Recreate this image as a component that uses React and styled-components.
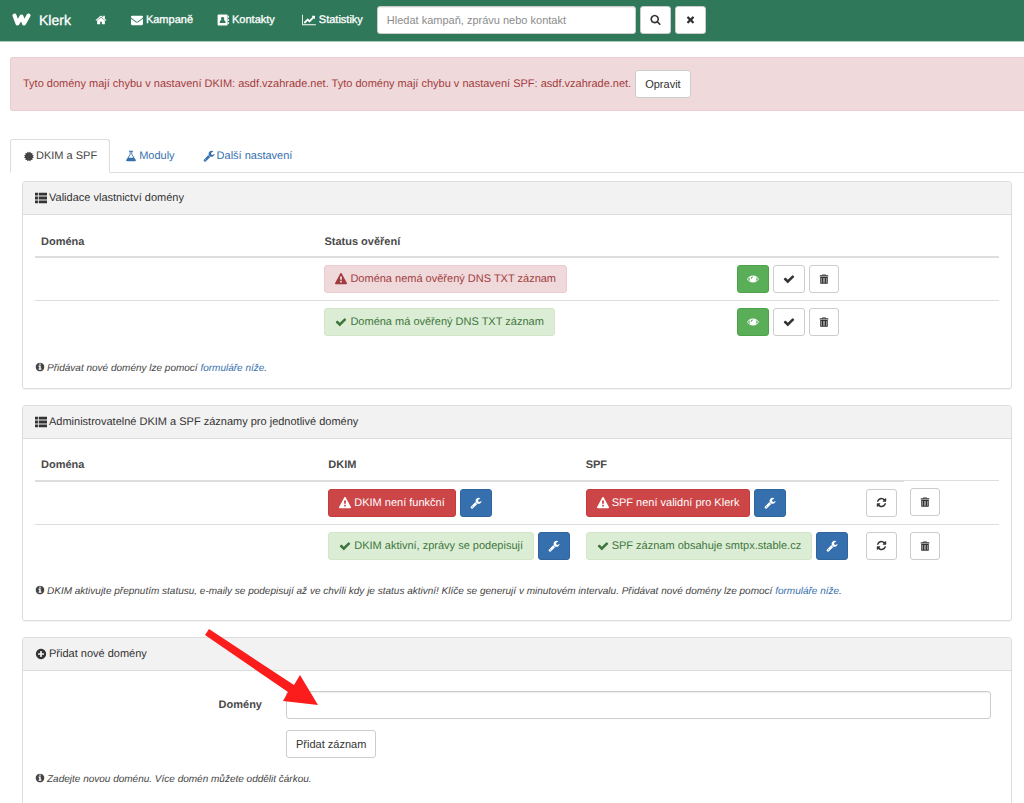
import React, { useState } from "react";
import styled, { createGlobalStyle } from "styled-components";

const GlobalStyle = createGlobalStyle`
	*, *::before, *::after {
		box-sizing: border-box;
	}
	body {
		margin: 0;
		background: #fff;
		color: #444;
		font-family: "Liberation Sans", Arial, sans-serif;
		font-size: 11px;
		line-height: 16px;
		text-rendering: geometricPrecision;
		overflow-x: hidden;
	}
	a {
		color: #3670ad;
		text-decoration: none;
	}
	button, input {
		font: inherit;
	}
`;

/* path data on a 1792 grid */
const icons = {
	home:
		"M1472 992v480q0 26-19 45t-45 19h-384v-384h-256v384h-384q-26 0-45-19t-19-45v-480q0-1 .5-3t.5-3l575-474 575 474q1 2 1 6zm223-69l-62 74q-8 9-21 11h-3q-13 0-21-7l-692-577-692 577q-12 8-24 7-13-2-21-11l-62-74q-8-10-7-23.5t11-21.5l719-599q32-26 76-26t76 26l244 204v-195q0-14 9-23t23-9h192q14 0 23 9t9 23v408l219 182q10 8 11 21.5t-7 23.5z",
	envelope:
		"M1792 710v794q0 66-47 113t-113 47h-1472q-66 0-113-47t-47-113v-794q44 49 101 87 362 246 497 345 57 42 92.5 65.5t94.5 48 110 24.5h2q51 0 110-24.5t94.5-48 92.5-65.5q170-123 498-345 57-39 100-87zm0-294q0 79-49 151t-122 123q-376 261-468 325-10 7-42.5 31t-54 38.5-52 32.5-57.5 27-50 9h-2q-23 0-50-9t-57.5-27-52-32.5-54-38.5-42.5-31q-91-64-262-182.5t-205-142.5q-62-42-117-115.5t-55-136.5q0-78 41.5-130t118.5-52h1472q65 0 112.5 47t47.5 113z",
	book:
		"M260 60h1160q70 0 120 50t50 120v1332q0 70-50 120t-120 50h-1160q-70 0-120-50t-50-120v-1332q0-70 50-120t120-50zM1640 270h90q40 0 40 40v220q0 40-40 40h-90zM1640 740h90q40 0 40 40v220q0 40-40 40h-90zM1640 1210h90q40 0 40 40v220q0 40-40 40h-90zM840 430a250 270 0 0 0-165 473q-275 60-275 360 0 90 90 90h700q90 0 90-90 0-300-275-360a250 270 0 0 0-165-473z",
	search:
		"M1216 832q0-185-131.5-316.5t-316.5-131.5-316.5 131.5-131.5 316.5 131.5 316.5 316.5 131.5 316.5-131.5 131.5-316.5zm512 832q0 52-38 90t-90 38q-54 0-90-38l-343-342q-179 124-399 124-143 0-273.5-55.5t-225-150-150-225-55.5-273.5 55.5-273.5 150-225 225-150 273.5-55.5 273.5 55.5 225 150 150 225 55.5 273.5q0 220-124 399l343 343q37 37 37 90z",
	times:
		"M1490 1322q0 40-28 68l-136 136q-28 28-68 28t-68-28l-294-294-294 294q-28 28-68 28t-68-28l-136-136q-28-28-28-68t28-68l294-294-294-294q-28-28-28-68t28-68l136-136q28-28 68-28t68 28l294 294 294-294q28-28 68-28t68 28l136 136q28 28 28 68t-28 68l-294 294 294 294q28 28 28 68z",
	certificate:
		"M1575 896l138 135q30 28 20 70-12 41-52 51l-188 48 53 186q12 41-19 70-29 31-70 19l-186-53-48 188q-10 40-51 52-12 2-19 2-31 0-51-22l-135-138-135 138q-28 30-70 20-41-11-51-52l-48-188-186 53q-41 12-70-19-31-29-19-70l53-186-188-48q-40-10-52-51-10-42 20-70l138-135-138-135q-30-28-20-70 12-41 52-51l188-48-53-186q-12-41 19-70 29-31 70-19l186 53 48-188q10-41 51-51 41-12 70 19l135 139 135-139q29-30 70-19 41 10 51 51l48 188 186-53q41-12 70 19 31 29 19 70l-53 186 188 48q40 10 52 51 10 42-20 70z",
	flask:
		"M1591 1448q56 89 21.5 152.5t-140.5 63.5h-1152q-106 0-140.5-63.5t21.5-152.5l503-793v-399h-64q-26 0-45-19t-19-45 19-45 45-19h512q26 0 45 19t19 45-19 45-45 19h-64v399zm-779-725l-272 429h712l-272-429-20-31v-436h-128v436z",
	wrench:
		"M448 1472q0-26-19-45t-45-19-45 19-19 45 19 45 45 19 45-19 19-45zm644-420l-682 682q-37 37-90 37-52 0-91-37l-106-108q-38-36-38-90 0-53 38-91l681-681q39 98 114.5 173.5t173.5 114.5zm634-435q0 39-23 106-47 134-164.5 217.5t-258.5 83.5q-185 0-316.5-131.5t-131.5-316.5 131.5-316.5 316.5-131.5q58 0 121.5 16.5t107.5 46.5q16 11 16 28t-16 28l-293 169v224l193 107q5-3 79-48.5t135.5-81 70.5-35.5q15 0 23.5 10t8.5 25z",
	list:
		"M0 100h440v440h-440zM560 100h1232v440h-1232zM0 676h440v440h-440zM560 676h1232v440h-1232zM0 1252h440v440h-440zM560 1252h1232v440h-1232z",
	info:
		"M1152 1376v-160q0-14-9-23t-23-9h-96v-512q0-14-9-23t-23-9h-320q-14 0-23 9t-9 23v160q0 14 9 23t23 9h96v320h-96q-14 0-23 9t-9 23v160q0 14 9 23t23 9h448q14 0 23-9t9-23zm-128-896v-160q0-14-9-23t-23-9h-192q-14 0-23 9t-9 23v160q0 14 9 23t23 9h192q14 0 23-9t9-23zm640 416q0 209-103 385.5t-279.5 279.5-385.5 103-385.5-103-279.5-279.5-103-385.5 103-385.5 279.5-279.5 385.5-103 385.5 103 279.5 279.5 103 385.5z",
	plus:
		"M1344 960v-128q0-26-19-45t-45-19h-256v-256q0-26-19-45t-45-19h-128q-26 0-45 19t-19 45v256h-256q-26 0-45 19t-19 45v128q0 26 19 45t45 19h256v256q0 26 19 45t45 19h128q26 0 45-19t19-45v-256h256q26 0 45-19t19-45zm320-64q0 209-103 385.5t-279.5 279.5-385.5 103-385.5-103-279.5-279.5-103-385.5 103-385.5 279.5-279.5 385.5-103 385.5 103 279.5 279.5 103 385.5z",
	warning:
		"M1024 1375v-190q0-14-9.500-23.500t-22.500-9.500h-192q-13 0-22.500 9.500t-9.500 23.500v190q0 14 9.500 23.500t22.500 9.500h192q13 0 22.500-9.500t9.500-23.500zm-2-374l18-459q0-12-10-19-13-11-24-11h-220q-11 0-24 11-10 7-10 21l17 457q0 10 10 16.500t24 6.500h185q14 0 23.500-6.500t10.500-16.500zm-14-934l768 1408q35 63-2 126-17 29-46.500 46t-63.500 17h-1536q-34 0-63.500-17t-46.500-46q-37-63-2-126l768-1408q17-31 47-49t65-18 65 18 47 49z",
	check:
		"M1671 566q0 40-28 68l-724 724-136 136q-28 28-68 28t-68-28l-136-136-362-362q-28-28-28-68t28-68l136-136q28-28 68-28t68 28l294 295 656-657q28-28 68-28t68 28l136 136q28 28 28 68z",
	refresh:
		"M1639 1056q0 5-1 7-64 268-268 434.500t-478 166.500q-146 0-282.500-55t-243.500-157l-129 129q-19 19-45 19t-45-19-19-45v-448q0-26 19-45t45-19h448q26 0 45 19t19 45-19 45l-137 137q71 66 161 102t187 36q134 0 250-65t186-179q11-17 53-117 8-23 30-23h192q13 0 22.500 9.500t9.500 22.500zm25-800v448q0 26-19 45t-45 19h-448q-26 0-45-19t-19-45 19-45l138-138q-148-137-349-137-134 0-250 65t-186 179q-11 17-53 117-8 23-30 23h-199q-13 0-22.500-9.500t-9.500-22.500v-7q65-268 270-434.500t480-166.500q146 0 284 55.500t245 156.500l130-129q19-19 45-19t45 19 19 45z",
	eye:
		"M896 380q-300 0-530 160t-366 356q136 196 366 356t530 160 530-160 366-356q-136-196-366-356t-530-160zM430 590q-60 110-60 230 0 210 150 370-240-90-400-294 130-190 310-306zM1362 590q180 116 310 306-160 204-400 294 150-160 150-370 0-120-60-230zM830 520q70 0 70 80t-80 90q-90 20-110 120-10 70-80 70-70-10-60-90 30-230 260-270z",
	trash:
		"M660 60h472q60 0 60 60v100h400q80 0 80 80v160h-1552v-160q0-80 80-80h400v-100q0-60 60-60zM720 150v70h352v-70zM220 540h1352v1100q0 110-110 110h-1132q-110 0-110-110zM440 700v880h80v-880zM720 700v880h80v-880zM992 700v880h80v-880zM1272 700v880h80v-880z",
};

const Svg = styled.svg`
	width: ${(props) => props.$size}px;
	height: ${(props) => props.$size}px;
	flex: none;
	fill: currentColor;
	vertical-align: -1px;
`;

function Icon({ name, size = 12 }) {
	return (
		<Svg $size={size} viewBox='0 0 1792 1792' aria-hidden='true'>
			<path fillRule='evenodd' d={icons[name]} />
		</Svg>
	);
}

const ChartSvg = styled.svg`
	width: 14px;
	height: 12px;
	fill: currentColor;
`;

const Navbar = styled.nav`
	display: flex;
	align-items: center;
	height: 42px;
	padding: 0 12px 2px;
	background: #2f785a;
	border-bottom: 1px solid #a9cbbb;
	color: #fff;
`;
const Brand = styled.a`
	display: flex;
	align-items: center;
	gap: 8px;
	margin-right: 24px;
	color: #fff;
	font-size: 14px;
	-webkit-text-stroke: 0.3px;
	svg {
		width: 19px;
		height: 14px;
	}
`;
const NavLink = styled.a`
	display: flex;
	align-items: center;
	gap: 3px;
	margin-right: ${(props) => props.$space || 24}px;
	color: #fff;
	-webkit-text-stroke: 0.3px;
`;
const SearchForm = styled.form`
	display: flex;
	align-items: center;
	gap: 4px;
	input {
		width: 259px;
	}
`;
const TextInput = styled.input`
	width: 100%;
	height: 28px;
	padding: 0 9px;
	border: 1px solid #ccc;
	border-radius: 3px;
	background: #fff;
	color: #555;
	box-shadow: inset 0 1px 1px rgba(0, 0, 0, 0.07);
	&::placeholder {
		color: #8c8c8c;
		opacity: 1;
	}
`;

const variants = {
	default: "#fff; border-color: #ccc; color: #333",
	primary: "#356fad; border-color: #2f649c; color: #fff",
	success: "#5bae58; border-color: #4fa24c; color: #fff",
};
const Button = styled.button`
	display: inline-flex;
	align-items: center;
	justify-content: center;
	min-width: ${(props) => props.$width || 32}px;
	height: 28px;
	padding: 0 9px;
	border: 1px solid;
	border-radius: 3px;
	background: ${(props) => variants[props.$variant || "default"]};
	cursor: pointer;
`;

const Alert = styled.div`
	display: flex;
	align-items: center;
	gap: 4px;
	margin: 15px 0 0 10px;
	padding: 12px;
	height: 54px;
	border: 1px solid #ebccd1;
	border-right: 0;
	border-radius: 3px 0 0 3px;
	background: #f0d9da;
	color: #a03c40;
	white-space: nowrap;
`;

const Tabs = styled.div`
	display: flex;
	margin: 28px 0 0 10px;
	border-bottom: 1px solid #ddd;
`;
const Tab = styled.a`
	display: flex;
	align-items: center;
	gap: 2px;
	height: 34px;
	margin: 0 2px -1px 0;
	padding: 0 12px;
	border: 1px solid ${(props) => (props.$active ? "#ddd" : "transparent")};
	border-bottom-color: ${(props) => (props.$active ? "#fff" : "transparent")};
	border-radius: 3px 3px 0 0;
	color: ${(props) => (props.$active ? "#444" : "#3670ad")};
`;

const Content = styled.main`
	display: flex;
	flex-direction: column;
	gap: 16px;
	padding: 8px 12px 16px 22px;
`;
const Panel = styled.section`
	position: relative;
	border: 1px solid #ddd;
	border-radius: 3px;
	box-shadow: 0 1px 1px rgba(0, 0, 0, 0.05);
`;
const PanelTitle = styled.h2`
	display: flex;
	align-items: center;
	gap: 2px;
	height: 33px;
	margin: 0;
	padding: 0 12px;
	border-bottom: 1px solid #ddd;
	background: #f2f2f2;
	color: #333;
	font-size: 11px;
	font-weight: normal;
`;
const PanelBody = styled.div`
	padding: ${(props) => props.$top || 12}px 12px ${(props) => props.$bottom || 12}px;
`;
const Table = styled.table`
	width: 100%;
	table-layout: fixed;
	border-collapse: collapse;
	th {
		height: 30px;
		padding: 0 6px;
		border-bottom: 2px solid #ddd;
		text-align: left;
		color: #4a4a4a;
	}
	td {
		height: 43px;
		padding: 7px 6px;
		border-top: 1px solid #ddd;
	}
`;
const Col = styled.col`
	width: ${(props) => props.$width};
`;
const Group = styled.div`
	display: flex;
	align-items: center;
	gap: 4px;
	white-space: nowrap;
`;

const tones = {
	danger: "#f0d9da; border-color: #ebccd1; color: #a03c40",
	success: "#dcedd5; border-color: #d3e6c8; color: #3c763d",
	error: "#cc4648; border-color: #c23c3e; color: #fff",
};
const StatusBox = styled.span`
	display: inline-flex;
	align-items: center;
	gap: 3px;
	height: 28px;
	padding: 0 10px;
	border: 1px solid;
	border-radius: 3px;
	background: ${(props) => tones[props.$tone]};
`;
function Status({ tone, children }) {
	return (
		<StatusBox $tone={tone}>
			<Icon name={tone === "success" ? "check" : "warning"} />
			{children}
		</StatusBox>
	);
}

const Note = styled.p`
	margin: ${(props) => props.$top}px 0 0;
	font-size: 10px;
	font-style: italic;
	svg {
		margin-right: 2px;
	}
`;

const FormRow = styled.div`
	display: grid;
	grid-template-columns: 227px 1fr;
	column-gap: 24px;
	align-items: center;
	padding: 0 8px 0 0;
	margin-bottom: 11px;
	label {
		text-align: right;
		font-weight: bold;
		color: #4a4a4a;
	}
	button {
		grid-column: 2;
		justify-self: start;
	}
`;
const Arrow = styled.svg`
	position: absolute;
	left: 180px;
	top: -12px;
	width: 120px;
	height: 84px;
	fill: #fb1d1c;
	pointer-events: none;
`;

const ownership = [
	{ tone: "danger", text: "Doména nemá ověřený DNS TXT záznam" },
	{ tone: "success", text: "Doména má ověřený DNS TXT záznam" },
];
const records = [
	{
		tone: "error",
		dkim: "DKIM není funkční",
		spf: "SPF není validní pro Klerk",
	},
	{
		tone: "success",
		dkim: "DKIM aktivní, zprávy se podepisují",
		spf: "SPF záznam obsahuje smtpx.stable.cz",
	},
];

function Navigation() {
	const [query, setQuery] = useState("");
	return (
		<Navbar>
			<Brand href='#'>
				<svg viewBox='0 0 19 14' fill='none' stroke='#fff' aria-hidden='true'>
					<path
						d='M2.500 2.500L5.500 10.500L9.500 3.500L12 10.500L16.500 2.500'
						strokeWidth='4'
						strokeLinecap='round'
						strokeLinejoin='round'
					/>
				</svg>
				Klerk
			</Brand>
			<NavLink href='#' aria-label='Domů'>
				<Icon name='home' />
			</NavLink>
			<NavLink href='#'>
				<Icon name='envelope' />
				Kampaně
			</NavLink>
			<NavLink href='#' $space={27}>
				<Icon name='book' />
				Kontakty
			</NavLink>
			<NavLink href='#' $space={14}>
				<ChartSvg viewBox='0 0 2048 1792' aria-hidden='true'>
					<path d='M2048 1536v128h-2048v-1536h128v1408h1920zm-128-1248v435q0 21-19.500 29.500t-35.500-7.500l-121-121-633 633q-10 10-23 10t-23-10l-233-233-416 416-192-192 585-585q10-10 23-10t23 10l233 233 464-464-121-121q-16-16-7.500-35.500t29.500-19.500h435q14 0 23 9t9 23z' />
				</ChartSvg>
				Statistiky
			</NavLink>
			<SearchForm onSubmit={(e) => e.preventDefault()}>
				<TextInput
					aria-label='Hledat'
					placeholder='Hledat kampaň, zprávu nebo kontakt'
					value={query}
					onChange={(e) => setQuery(e.target.value)}
				/>
				<Button type='submit' $width={30} aria-label='Hledat'>
					<Icon name='search' size={11} />
				</Button>
				<Button
					type='button'
					$width={30}
					aria-label='Zrušit'
					onClick={() => setQuery("")}>
					<Icon name='times' size={11} />
				</Button>
			</SearchForm>
		</Navbar>
	);
}

export default function App() {
	return (
		<>
			<GlobalStyle />
			<Navigation />
			<Alert role='alert'>
				<span>
					Tyto domény mají chybu v nastavení DKIM: asdf.vzahrade.net. Tyto
					domény mají chybu v nastavení SPF: asdf.vzahrade.net.
				</span>
				<Button>Opravit</Button>
			</Alert>
			<Tabs>
				<Tab href='#dkim' $active>
					<Icon name='certificate' size={11} />
					DKIM a SPF
				</Tab>
				<Tab href='#moduly'>
					<Icon name='flask' size={12} />
					Moduly
				</Tab>
				<Tab href='#nastaveni'>
					<Icon name='wrench' size={12} />
					Další nastavení
				</Tab>
			</Tabs>
			<Content>
				<Panel>
					<PanelTitle>
						<Icon name='list' />
						Validace vlastnictví domény
					</PanelTitle>
					<PanelBody $bottom={11}>
						<Table>
							<colgroup>
								<Col $width='29.4%' />
								<Col $width='42.8%' />
								<Col />
							</colgroup>
							<thead>
								<tr>
									<th>Doména</th>
									<th>Status ověření</th>
									<th />
								</tr>
							</thead>
							<tbody>
								{ownership.map((row) => (
									<tr key={row.tone}>
										<td />
										<td>
											<Group>
												<Status tone={row.tone}>{row.text}</Status>
											</Group>
										</td>
										<td>
											<Group>
												<Button $variant='success' aria-label='Zobrazit'>
													<Icon name='eye' />
												</Button>
												<Button aria-label='Ověřit'>
													<Icon name='check' />
												</Button>
												<Button $width={30} aria-label='Smazat'>
													<Icon name='trash' size={10} />
												</Button>
											</Group>
										</td>
									</tr>
								))}
							</tbody>
						</Table>
						<Note $top={17}>
							<Icon name='info' size={10} />
							Přidávat nové domény lze pomocí <a href='#form'>formuláře níže</a>.
						</Note>
					</PanelBody>
				</Panel>

				<Panel>
					<PanelTitle>
						<Icon name='list' />
						Administrovatelné DKIM a SPF záznamy pro jednotlivé domény
					</PanelTitle>
					<PanelBody $bottom={20}>
						<Table>
							<colgroup>
								<Col $width='29.8%' />
								<Col $width='26.7%' />
								<Col $width='29.1%' />
								<Col $width='4.5%' />
								<Col />
							</colgroup>
							<thead>
								<tr>
									<th>Doména</th>
									<th>DKIM</th>
									<th>SPF</th>
									<th />
								</tr>
							</thead>
							<tbody>
								{records.map((row) => (
									<tr key={row.tone}>
										<td />
										<td>
											<Group>
												<Status tone={row.tone}>{row.dkim}</Status>
												<Button $variant='primary' aria-label='Nastavit DKIM'>
													<Icon name='wrench' />
												</Button>
											</Group>
										</td>
										<td>
											<Group>
												<Status tone={row.tone}>{row.spf}</Status>
												<Button $variant='primary' aria-label='Nastavit SPF'>
													<Icon name='wrench' />
												</Button>
											</Group>
										</td>
										<td>
											<Group>
												<Button $width={30} aria-label='Obnovit'>
													<Icon name='refresh' size={11} />
												</Button>
											</Group>
										</td>
										<td>
											<Group>
												<Button $width={30} aria-label='Smazat'>
													<Icon name='trash' size={10} />
												</Button>
											</Group>
										</td>
									</tr>
								))}
							</tbody>
						</Table>
						<Note $top={17}>
							<Icon name='info' size={10} />
							DKIM aktivujte přepnutím statusu, e-maily se podepisují až ve
							chvíli kdy je status aktivní! Klíče se generují v minutovém
							intervalu. Přidávat nové domény lze pomocí{" "}
							<a href='#form'>formuláře níže</a>.
						</Note>
					</PanelBody>
				</Panel>

				<Panel as='form' id='form' onSubmit={(e) => e.preventDefault()}>
					<PanelTitle>
						<Icon name='plus' />
						Přidat nové domény
					</PanelTitle>
					<PanelBody $top={20} $bottom={24}>
						<FormRow>
							<label htmlFor='domains'>Domény</label>
							<TextInput id='domains' />
						</FormRow>
						<FormRow>
							<Button type='submit'>Přidat záznam</Button>
						</FormRow>
						<Note $top={14}>
							<Icon name='info' size={10} />
							Zadejte novou doménu. Více domén můžete oddělit čárkou.
						</Note>
					</PanelBody>
					<Arrow viewBox='0 0 120 84' aria-hidden='true'>
						<path d='M6 3L2 9L85 66L80 75L115 79L97 49L91 59Z' />
					</Arrow>
				</Panel>
			</Content>
		</>
	);
}
